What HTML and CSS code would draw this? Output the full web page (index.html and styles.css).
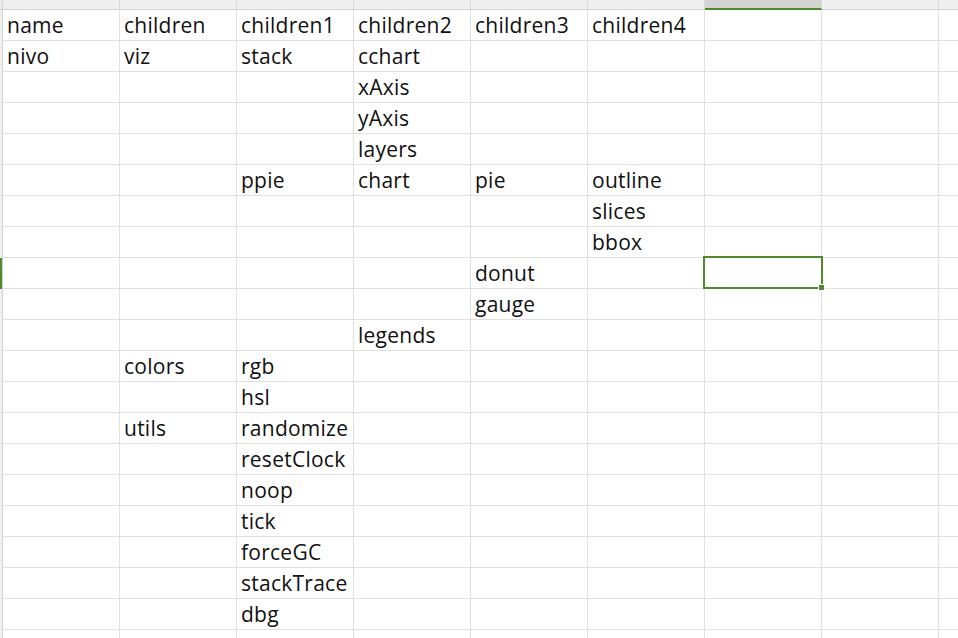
FILE: index.html
```html
<!DOCTYPE html>
<html>
<head>
<meta charset="utf-8">
<link rel="stylesheet" href="styles.css">
</head>
<body>
<div class="sheet">
  <div class="grid" id="grid"></div>
  <div class="selection"><span class="handle"></span></div>
</div>
<script>
  var data = [
    ["name","children","children1","children2","children3","children4"],
    ["nivo","viz","stack","cchart"],
    ["","","","xAxis"],
    ["","","","yAxis"],
    ["","","","layers"],
    ["","","ppie","chart","pie","outline"],
    ["","","","","","slices"],
    ["","","","","","bbox"],
    ["","","","","donut"],
    ["","","","","gauge"],
    ["","","","legends"],
    ["","colors","rgb"],
    ["","","hsl"],
    ["","utils","randomize"],
    ["","","resetClock"],
    ["","","noop"],
    ["","","tick"],
    ["","","forceGC"],
    ["","","stackTrace"],
    ["","","dbg"],
    [],
    []
  ];
  var g = document.getElementById('grid');
  var html = '<div class="corner"></div>';
  for (var c = 0; c < 9; c++) {
    html += '<div class="colhead' + (c === 6 ? ' active' : '') + '"></div>';
  }
  for (var r = 0; r < data.length; r++) {
    html += '<div class="rowhead' + (r === 8 ? ' active' : '') + '"></div>';
    for (var c2 = 0; c2 < 9; c2++) {
      var t = data[r][c2] || '';
      html += '<div class="cell">' + t + '</div>';
    }
  }
  g.innerHTML = html;
</script>
</body>
</html>
```
FILE: styles.css
```css
html, body {
  margin: 0;
  padding: 0;
  background: #ffffff;
  overflow: hidden;
}
.sheet {
  position: relative;
  width: 958px;
  height: 638px;
  overflow: hidden;
}
.grid {
  display: grid;
  grid-template-columns: 3px repeat(9, 117px);
  grid-auto-rows: 31px;
  grid-template-rows: 10px;
}
.corner {
  background: #ececec;
  border-bottom: 1px solid #d4d4d4;
  border-right: 1px solid #d4d4d4;
  box-sizing: border-box;
}
.colhead {
  background: #efefef;
  border-right: 1px solid #d9d9d9;
  border-bottom: 1px solid #d4d4d4;
  box-sizing: border-box;
}
.colhead.active {
  background: #d3d3d3;
  border-bottom: 2px solid #4d8a2e;
}
.rowhead {
  background: #efefef;
  border-right: 1px solid #d4d4d4;
  box-sizing: border-box;
}
.rowhead.active {
  background: #4d8a2e;
}
.cell {
  box-sizing: border-box;
  border-right: 1px solid #e1e1e1;
  border-bottom: 1px solid #e1e1e1;
  padding: 1px 0 0 4px;
  font-family: "Open Sans", "Noto Sans", sans-serif;
  font-size: 21px;
  letter-spacing: 0.25px;
  line-height: 29px;
  color: #111111;
  white-space: nowrap;
  overflow: visible;
}
.selection {
  position: absolute;
  left: 703px;
  top: 256px;
  width: 120px;
  height: 33px;
  box-sizing: border-box;
  border: 2px solid #4d8a2e;
}
.handle {
  position: absolute;
  right: -4px;
  bottom: -4px;
  width: 5px;
  height: 5px;
  background: #4d8a2e;
  border: 1px solid #ffffff;
}
```
